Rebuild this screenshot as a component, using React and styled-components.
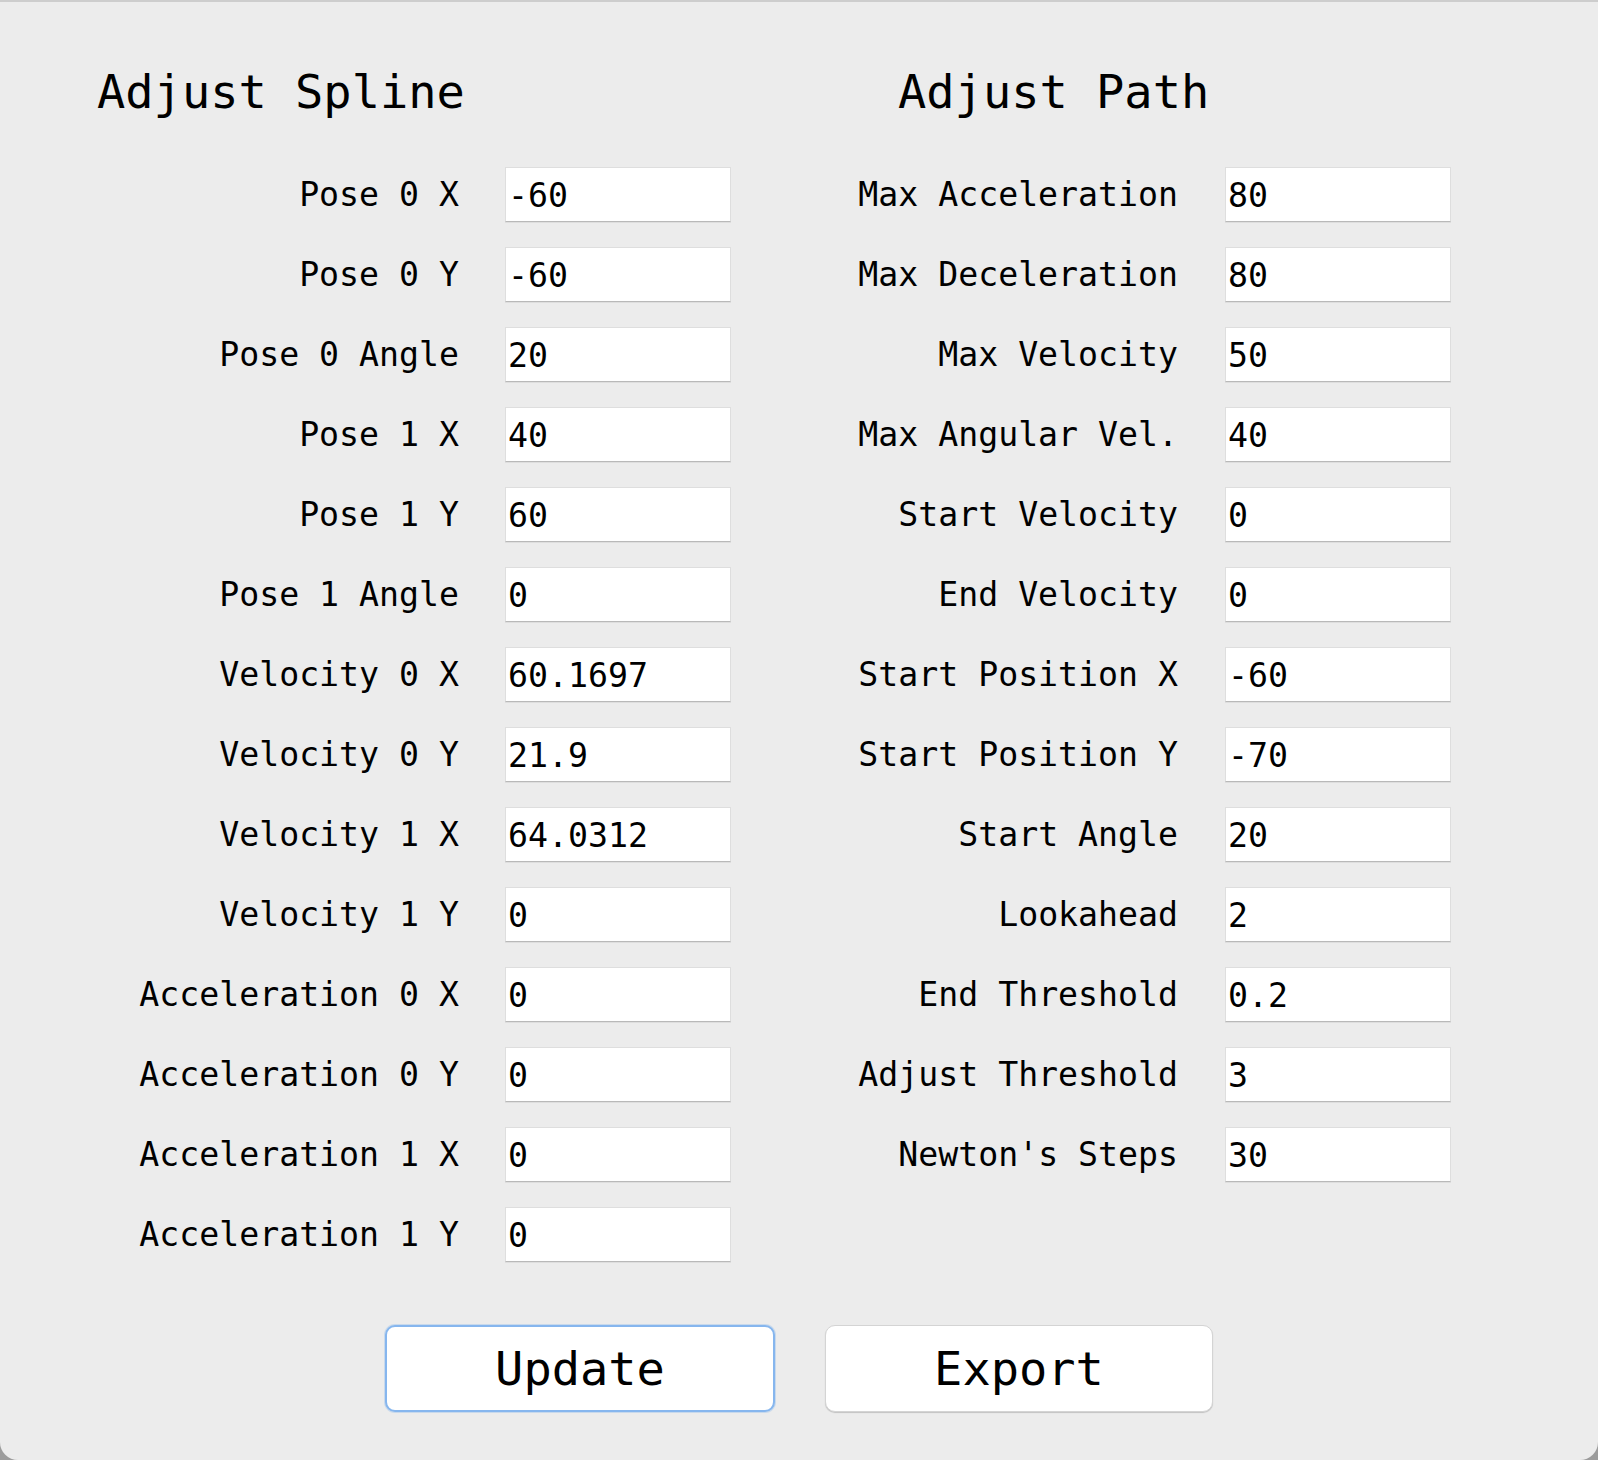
import React from "react";
import styled, { createGlobalStyle } from "styled-components";

const Global = createGlobalStyle`
  html, body {
    margin: 0;
    padding: 0;
    background: #9c9c9c;
  }
  body {
    font-family: "DejaVu Sans Mono", "Liberation Mono", monospace;
    color: #000;
  }
  * { box-sizing: border-box; }
`;

const Window = styled.div`
  min-height: 100vh;
  background: #ececec;
  border-top: 2px solid #cdcdcd;
  border-radius: 0 0 18px 18px;
  padding: 62px 0 48px;
  display: flex;
  flex-direction: column;
`;

const Sections = styled.div`
  display: flex;
  align-items: flex-start;
  padding-left: ${(p) => p.$left}px;
  gap: 109px;
`;

const Section = styled.section`
  display: flex;
  flex-direction: column;
`;

const Heading = styled.h2`
  margin: 0 0 47px;
  padding-left: ${(p) => p.$indent || 0}px;
  font-family: "DejaVu Sans Mono", "Liberation Mono", monospace;
  font-weight: normal;
  font-size: 47px;
  line-height: 56px;
  white-space: pre;
`;

const Fields = styled.div`
  display: grid;
  grid-template-columns: ${(p) => p.$labelWidth}px 226px;
  column-gap: ${(p) => p.$gap}px;
  row-gap: 25px;
`;

const Label = styled.label`
  height: 55px;
  display: flex;
  align-items: center;
  justify-content: flex-end;
  font-size: 33.2px;
  white-space: pre;
`;

const Field = styled.input`
  height: 55px;
  width: 226px;
  margin: 0;
  padding: 1px 2px 0;
  background: #fff;
  border: 1px solid #dedede;
  border-bottom-color: #b9b9b9;
  box-shadow: 0 1px 0 rgba(0, 0, 0, 0.06);
  border-radius: 0;
  font-family: "DejaVu Sans Mono", "Liberation Mono", monospace;
  font-size: 33.2px;
  color: #000;
  outline: none;
`;

const Buttons = styled.div`
  display: flex;
  justify-content: center;
  gap: 50px;
  margin-top: 63px;
`;

const Button = styled.button`
  width: ${(p) => (p.$focused ? 390 : 388)}px;
  height: 87px;
  background: #fff;
  border-radius: 10px;
  border: ${(p) => (p.$focused ? "2px solid #86b6ee" : "1px solid #d4d4d4")};
  box-shadow: ${(p) =>
    p.$focused ? "0 0 0 1px rgba(134, 182, 238, 0.35)" : "0 1px 1px rgba(0, 0, 0, 0.18)"};
  font-family: "DejaVu Sans Mono", "Liberation Mono", monospace;
  font-size: 47px;
  color: #000;
  padding: 0;
  cursor: pointer;
`;

const spline = [
  ["Pose 0 X", "-60"],
  ["Pose 0 Y", "-60"],
  ["Pose 0 Angle", "20"],
  ["Pose 1 X", "40"],
  ["Pose 1 Y", "60"],
  ["Pose 1 Angle", "0"],
  ["Velocity 0 X", "60.1697"],
  ["Velocity 0 Y", "21.9"],
  ["Velocity 1 X", "64.0312"],
  ["Velocity 1 Y", "0"],
  ["Acceleration 0 X", "0"],
  ["Acceleration 0 Y", "0"],
  ["Acceleration 1 X", "0"],
  ["Acceleration 1 Y", "0"],
];

const path = [
  ["Max Acceleration", "80"],
  ["Max Deceleration", "80"],
  ["Max Velocity", "50"],
  ["Max Angular Vel.", "40"],
  ["Start Velocity", "0"],
  ["End Velocity", "0"],
  ["Start Position X", "-60"],
  ["Start Position Y", "-70"],
  ["Start Angle", "20"],
  ["Lookahead", "2"],
  ["End Threshold", "0.2"],
  ["Adjust Threshold", "3"],
  ["Newton's Steps", "30"],
];

function FieldList({ items, labelWidth, gap, prefix }) {
  return (
    <Fields $labelWidth={labelWidth} $gap={gap}>
      {items.map(([label, value], i) => (
        <React.Fragment key={label}>
          <Label htmlFor={`${prefix}-${i}`}>{label}</Label>
          <Field id={`${prefix}-${i}`} defaultValue={value} />
        </React.Fragment>
      ))}
    </Fields>
  );
}

export default function App() {
  return (
    <>
      <Global />
      <Window>
        <Sections $left={97}>
          <Section>
            <Heading>Adjust Spline</Heading>
            <FieldList items={spline} labelWidth={362} gap={46} prefix="spline" />
          </Section>
          <Section>
            <Heading $indent={58}>Adjust Path</Heading>
            <FieldList items={path} labelWidth={338} gap={47} prefix="path" />
          </Section>
        </Sections>
        <Buttons>
          <Button $focused>Update</Button>
          <Button>Export</Button>
        </Buttons>
      </Window>
    </>
  );
}
